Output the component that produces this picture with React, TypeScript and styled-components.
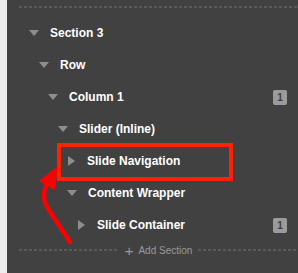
import styled, { createGlobalStyle } from 'styled-components';

const GlobalStyle = createGlobalStyle`
  body {
    margin: 0;
    background: #414141;
    font-family: "Liberation Sans", Arial, sans-serif;
  }
`;

type Node = {
  label: string;
  level: number;
  open: boolean;
  count?: number;
};

const nodes: Node[] = [
  { label: 'Section 3', level: 0, open: true },
  { label: 'Row', level: 1, open: true },
  { label: 'Column 1', level: 2, open: true, count: 1 },
  { label: 'Slider (Inline)', level: 3, open: true },
  { label: 'Slide Navigation', level: 4, open: false },
  { label: 'Content Wrapper', level: 4, open: true },
  { label: 'Slide Container', level: 5, open: false, count: 1 },
];

const App = () => {
  return (
    <Page>
      <GlobalStyle />
      <Strip />
      <Panel>
        <Dashes />
        <Tree>
          {nodes.map((n) => (
            <Row key={n.label} level={n.level}>
              <Toggle open={n.open} />
              <Label>{n.label}</Label>
              {n.count && <Badge>{n.count}</Badge>}
            </Row>
          ))}
        </Tree>
        <AddRow>
          <AddDashes />
          <AddButton>
            <Plus>+</Plus>
            Add Section
          </AddButton>
          <AddDashes />
        </AddRow>
      </Panel>
      <Highlight />
      <Arrow width='298' height='273' viewBox='0 0 298 273'>
        <path
          d='M70 242 L51 213 C44 203 42 196 46 186'
          fill='none'
          stroke='#ff0000'
          strokeWidth='4.5'
          strokeLinecap='round'
        />
        <polygon points='58,166 39,181 55,190' fill='#ff0000' />
      </Arrow>
    </Page>
  );
};

const Page = styled.div`
  position: relative;
  display: flex;
  width: 298px;
  height: 273px;
  overflow: hidden;
`;

const Strip = styled.div`
  width: 7px;
  background: #ededed;
`;

const Panel = styled.div`
  flex: 1;
  display: flex;
  flex-direction: column;
  background: #414141;
  padding-top: 6px;
`;

const dashBg = `
  height: 2px;
  background: repeating-linear-gradient(
    to right,
    #5a5a5a 0 3px,
    transparent 3px 5px
  );
`;

const Dashes = styled.div`
  margin-left: 12px;
  ${dashBg}
`;

const Tree = styled.div`
  display: flex;
  flex-direction: column;
  margin-top: 9px;
`;

const Row = styled.div<{ level: number }>`
  display: flex;
  align-items: center;
  height: 32px;
  padding-left: ${({ level }) => 22 + Math.round(level * 9.5)}px;
  padding-right: 11px;
`;

const Toggle = styled.span<{ open: boolean }>`
  width: 0;
  height: 0;
  margin-right: ${({ open }) => (open ? 11 : 12)}px;
  margin-left: ${({ open }) => (open ? 0 : 1)}px;
  border-style: solid;
  border-color: transparent;
  ${({ open }) =>
    open
      ? `border-width: 6px 5px 0 5px; border-top-color: #8e8e8e;`
      : `border-width: 5px 0 5px 7px; border-left-color: #8e8e8e;`}
`;

const Label = styled.span`
  flex: 1;
  color: #ffffff;
  font-size: 12px;
  font-weight: bold;
`;

const Badge = styled.span`
  display: flex;
  align-items: center;
  justify-content: center;
  width: 14px;
  height: 15px;
  border-radius: 2px;
  background: #9b9b9b;
  color: #3e3e3e;
  font-size: 10px;
  font-weight: bold;
`;

const AddRow = styled.div`
  display: flex;
  align-items: center;
  gap: 6px;
  padding-left: 12px;
  height: 18px;
`;

const AddDashes = styled.div`
  flex: 1;
  ${dashBg}
`;

const AddButton = styled.span`
  display: flex;
  align-items: center;
  color: #9a9a9a;
  font-size: 10px;
`;

const Plus = styled.span`
  font-size: 15px;
  margin-right: 5px;
  line-height: 1;
`;

const Highlight = styled.div`
  position: absolute;
  left: 57px;
  top: 143px;
  width: 176px;
  height: 38px;
  box-sizing: border-box;
  border: 4px solid #ff2200;
`;

const Arrow = styled.svg`
  position: absolute;
  left: 0;
  top: 0;
  pointer-events: none;
`;

export default App;
